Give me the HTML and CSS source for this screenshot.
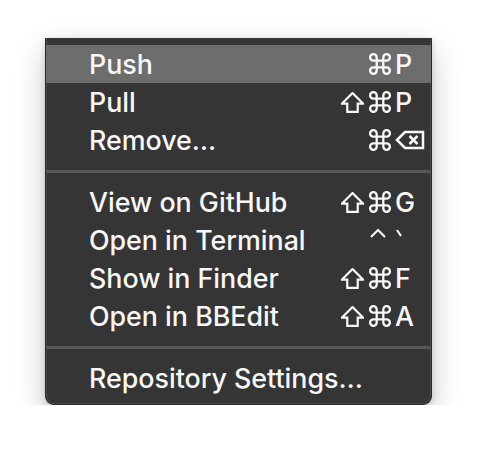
FILE: index.html
```html
<!DOCTYPE html>
<html>
<head>
<meta charset="utf-8">
<link rel="stylesheet" href="styles.css">
</head>
<body>
<div class="menu">
  <div class="item active"><span class="label">Push</span><span class="sc"><span class="mods"><svg class="cmd" viewBox="1 1 20 20"><path d="M8 8V5A3 3 0 1 0 5 8H17A3 3 0 1 0 14 5V17A3 3 0 1 0 17 14H5A3 3 0 1 0 8 17Z"/></svg></span><span class="key">P</span></span></div>
  <div class="item"><span class="label">Pull</span><span class="sc"><span class="mods"><svg class="shift" viewBox="0.5 1 22 20"><path d="M11.5 2L21.5 12H16.5V20H6.5V12H1.5Z"/></svg><svg class="cmd" viewBox="1 1 20 20"><path d="M8 8V5A3 3 0 1 0 5 8H17A3 3 0 1 0 14 5V17A3 3 0 1 0 17 14H5A3 3 0 1 0 8 17Z"/></svg></span><span class="key">P</span></span></div>
  <div class="item"><span class="label">Remove…</span><span class="sc"><span class="mods"><svg class="cmd" viewBox="1 1 20 20"><path d="M8 8V5A3 3 0 1 0 5 8H17A3 3 0 1 0 14 5V17A3 3 0 1 0 17 14H5A3 3 0 1 0 8 17Z"/></svg></span><span class="key"><svg class="del" viewBox="0 0 30 22"><path d="M2 11L10 3H28V19H10Z"/><path d="M14.5 7L22.5 15M22.5 7L14.5 15"/></svg></span></span></div>
  <div class="sep"></div>
  <div class="item"><span class="label">View on GitHub</span><span class="sc"><span class="mods"><svg class="shift" viewBox="0.5 1 22 20"><path d="M11.5 2L21.5 12H16.5V20H6.5V12H1.5Z"/></svg><svg class="cmd" viewBox="1 1 20 20"><path d="M8 8V5A3 3 0 1 0 5 8H17A3 3 0 1 0 14 5V17A3 3 0 1 0 17 14H5A3 3 0 1 0 8 17Z"/></svg></span><span class="key">G</span></span></div>
  <div class="item"><span class="label">Open in Terminal</span><span class="sc"><span class="mods"><svg class="ctrl" viewBox="0 0 22 22"><path d="M3 10L10 3L17 10"/></svg></span><span class="key"><svg class="tick" viewBox="0 0 10 22"><path d="M2 3L6 9"/></svg></span></span></div>
  <div class="item"><span class="label">Show in Finder</span><span class="sc"><span class="mods"><svg class="shift" viewBox="0.5 1 22 20"><path d="M11.5 2L21.5 12H16.5V20H6.5V12H1.5Z"/></svg><svg class="cmd" viewBox="1 1 20 20"><path d="M8 8V5A3 3 0 1 0 5 8H17A3 3 0 1 0 14 5V17A3 3 0 1 0 17 14H5A3 3 0 1 0 8 17Z"/></svg></span><span class="key">F</span></span></div>
  <div class="item"><span class="label">Open in BBEdit</span><span class="sc"><span class="mods"><svg class="shift" viewBox="0.5 1 22 20"><path d="M11.5 2L21.5 12H16.5V20H6.5V12H1.5Z"/></svg><svg class="cmd" viewBox="1 1 20 20"><path d="M8 8V5A3 3 0 1 0 5 8H17A3 3 0 1 0 14 5V17A3 3 0 1 0 17 14H5A3 3 0 1 0 8 17Z"/></svg></span><span class="key">A</span></span></div>
  <div class="sep"></div>
  <div class="item"><span class="label">Repository Settings…</span></div>
</div>
</body>
</html>
```
FILE: styles.css
```css
html, body {
  margin: 0;
  padding: 0;
  background: #ffffff;
}
body {
  padding: 38px 0 0 45px;
  font-family: Inter, "Noto Sans", sans-serif;
}
.menu {
  width: 387px;
  box-sizing: border-box;
  background: #353535;
  border: 1px solid #2a2a2a;
  border-top: none;
  border-radius: 0 0 9px 9px;
  padding: 7px 0 7px 0;
  box-shadow: inset 1px 0 0 #4a4a4a, inset -1px 0 0 #4a4a4a, inset 0 -1px 0 #4a4a4a, 0 12px 30px rgba(0,0,0,0.22), 0 2px 6px rgba(0,0,0,0.15);
}
.item {
  height: 38px;
  display: flex;
  align-items: center;
  justify-content: space-between;
  padding-left: 43px;
  color: #f7f7f7;
  font-size: 26.8px;
  font-weight: 500;
}
.item.active {
  background: #6d6d6d;
}
.sc {
  display: flex;
  align-items: center;
}
.mods {
  display: flex;
  align-items: center;
  gap: 5px;
}
.mods svg, .key svg {
  display: block;
  fill: none;
  stroke: #f7f7f7;
  stroke-width: 2.1;
}
.cmd {
  width: 22px;
  height: 22px;
}
.shift {
  width: 23px;
  height: 21px;
}
.ctrl {
  width: 22px;
  height: 22px;
  margin-top: -4px;
  margin-right: 1px;
}
.tick {
  width: 10px;
  height: 22px;
  margin-top: -4px;
}
.del {
  width: 30px;
  height: 22px;
  stroke-width: 2.5 !important;
}
.key {
  width: 40px;
  padding-left: 4px;
  box-sizing: border-box;
  display: flex;
  align-items: center;
}
.sep {
  height: 3px;
  background: #575757;
  margin: 11px 0 10px;
}
```
